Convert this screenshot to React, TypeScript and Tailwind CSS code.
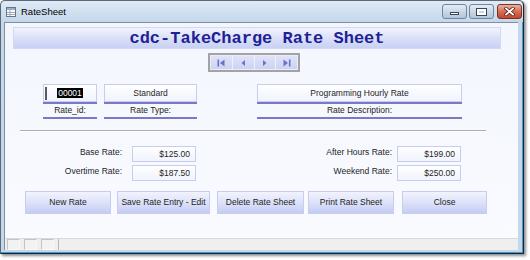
import React from "react";

const SANS = "font-['Liberation_Sans',Arial,sans-serif]";
const NAV = "#6b70cc";

function NavIcon({ kind }: { kind: "first" | "prev" | "next" | "last" }) {
  return (
    <svg width="8" height="8" viewBox="0 0 8 8">
      {kind === "first" && (
        <>
          <rect x="0.5" y="0.5" width="1.6" height="7" fill={NAV} />
          <path d="M7.5 0.5 L3 4 L7.5 7.5Z" fill={NAV} />
        </>
      )}
      {kind === "prev" && <path d="M6 1 L2.5 4 L6 7Z" fill={NAV} />}
      {kind === "next" && <path d="M2 1 L5.5 4 L2 7Z" fill={NAV} />}
      {kind === "last" && (
        <>
          <path d="M0.5 0.5 L5 4 L0.5 7.5Z" fill={NAV} />
          <rect x="5.9" y="0.5" width="1.6" height="7" fill={NAV} />
        </>
      )}
    </svg>
  );
}

function CaptionButton({ kind }: { kind: "min" | "max" | "close" }) {
  const close = kind === "close";
  return (
    <div
      className={`flex h-[15px] w-[25px] items-center justify-center rounded-[3px] border ${
        close
          ? "border-[#7a3226] bg-gradient-to-b from-[#eab0a2] via-[#d66e56] to-[#c2452c]"
          : "border-[#71849b] bg-gradient-to-b from-[#e4edf6] via-[#c9d7e7] to-[#b3c6dc]"
      }`}
    >
      {kind === "min" && <div className="mt-[4px] h-[3px] w-[9px] border border-[#3b4756] bg-white" />}
      {kind === "max" && <div className="h-[6px] w-[9px] border-[2px] border-white outline outline-1 outline-[#3b4756]" />}
      {kind === "close" && (
        <svg width="11" height="9" viewBox="0 0 11 9">
          <path d="M2 1.5 L9 7.5 M9 1.5 L2 7.5" stroke="#5a1c12" strokeWidth="3.4" strokeLinecap="square" />
          <path d="M2 1.5 L9 7.5 M9 1.5 L2 7.5" stroke="#ffffff" strokeWidth="1.8" strokeLinecap="square" />
        </svg>
      )}
    </div>
  );
}

function TitleIcon() {
  return (
    <svg width="10" height="10" viewBox="0 0 10 10">
      <rect x="0.5" y="0.5" width="9" height="9" fill="#ffffff" stroke="#6a7585" />
      <rect x="1" y="1" width="8" height="2" fill="#9aaec8" />
      <path d="M1 5.5 H9 M1 7.5 H9 M4 3 V9" stroke="#8a96a6" strokeWidth="0.8" />
    </svg>
  );
}

function TopField({
  width,
  value,
  label,
  selected,
}: {
  width: string;
  value: string;
  label: string;
  selected?: boolean;
}) {
  return (
    <div className={`flex flex-col ${width}`}>
      <div className="relative flex h-[18px] items-center justify-center border border-[#c7cdef] bg-gradient-to-b from-[#ffffff] to-[#f1f3fd] text-[8.5px] text-[#1e1e1e]">
        {selected && <div className="absolute left-[1px] top-[2px] h-[13px] w-[2px] bg-[#5a5a5a]" />}
        <span className={selected ? "bg-black px-[1px] leading-[10px] text-white" : ""}>{value}</span>
      </div>
      <div className="h-[2px] bg-[#7b78c6]" />
      <div className="flex h-[13px] items-center justify-center text-[8.5px] text-[#1e1e1e]">{label}</div>
      <div className="h-[2px] bg-[#7b78c6]" />
    </div>
  );
}

function Money({ value }: { value: string }) {
  return (
    <div className="flex h-[16px] w-[64px] items-center justify-end border border-[#c7cdef] bg-gradient-to-b from-[#ffffff] to-[#f1f3fd] pr-[5px] pt-[1px] text-[8.5px] text-[#1e1e1e]">
      {value}
    </div>
  );
}

function RateRow({ label, value, labelWidth, gap }: { label: string; value: string; labelWidth: string; gap: string }) {
  return (
    <div className={`flex items-start ${gap}`}>
      <div className={`${labelWidth} mt-[1px] text-right text-[8.5px] leading-[11px] text-[#1e1e1e]`}>{label}</div>
      <Money value={value} />
    </div>
  );
}

function ActionButton({ label, width }: { label: string; width: string }) {
  return (
    <div
      className={`flex h-[23px] ${width} items-center justify-center border border-[#c6cdf0] bg-gradient-to-b from-[#f1f3fd] via-[#dde2f8] to-[#c4ccf3] text-[8.5px] text-[#1e1e1e]`}
    >
      {label}
    </div>
  );
}

export default function App() {
  return (
    <div className={`h-[260px] w-[530px] bg-white ${SANS}`}>
      <div className="flex h-[254px] w-[524px] flex-col rounded-t-[5px] border border-[#5d6877] border-r-[#1d232b] border-b-[#1d232b] bg-[#c4d7eb] shadow-[inset_-1px_-1px_0_#3d9ad8,2px_2px_3px_rgba(0,0,0,0.45)]">
        {/* title bar */}
        <div className="flex h-[21px] items-start rounded-t-[5px] bg-gradient-to-b from-[#dfeaf6] to-[#c4d7eb] pl-[5px] pr-[1px]">
          <div className="mt-[6px]">
            <TitleIcon />
          </div>
          <div className="ml-[5px] mt-[4px] text-[9.5px] leading-[13px] text-black">RateSheet</div>
          <div className="ml-auto mt-[3px] flex gap-[2px]">
            <CaptionButton kind="min" />
            <CaptionButton kind="max" />
            <div className="ml-[1px]">
              <CaptionButton kind="close" />
            </div>
          </div>
        </div>

        {/* client area */}
        <div className="ml-[3px] mr-[5px] flex h-[228px] flex-col border-l border-t border-[#7f8fa3] bg-gradient-to-b from-[#f3f6fd] to-[#f9fbff]">
          <div className="ml-[8px] mt-[4px] flex h-[22px] w-[488px] items-center justify-center border border-[#d3d9f5] bg-gradient-to-b from-[#f1f3fd] via-[#dbe0f8] to-[#c9d1f4]">
            <span className="font-['Liberation_Mono','Courier_New',monospace] text-[17px] font-bold leading-none text-[#1f1f96]">
              cdc-TakeCharge Rate Sheet
            </span>
          </div>

          {/* record navigator */}
          <div className="ml-[203px] mt-[4px] flex h-[19px] w-[92px] border-2 border-[#a3a3a3] bg-[#e9ecfa] p-[1px]">
            {(["first", "prev", "next", "last"] as const).map((k) => (
              <div
                key={k}
                className="flex flex-1 items-center justify-center border-r border-[#eef0fb] bg-gradient-to-b from-[#dfe3f8] to-[#cdd3f3] last:border-r-0"
              >
                <NavIcon kind={k} />
              </div>
            ))}
          </div>

          {/* id / type / description */}
          <div className="ml-[38px] mt-[12px] flex">
            <TopField width="w-[54px]" value="00001" label="Rate_id:" selected />
            <div className="ml-[7px]">
              <TopField width="w-[93px]" value="Standard" label="Rate Type:" />
            </div>
            <div className="ml-[60px]">
              <TopField width="w-[205px]" value="Programming Hourly Rate" label="Rate Description:" />
            </div>
          </div>

          <div className="ml-[15px] mt-[11px] h-[2px] w-[466px] border-t border-[#acacac] bg-white" />

          {/* rates */}
          <div className="mt-[14px] flex">
            <div className="ml-[37px] flex flex-col gap-[3px]">
              <RateRow label="Base Rate:" value="$125.00" labelWidth="w-[80px]" gap="gap-[10px]" />
              <RateRow label="Overtime Rate:" value="$187.50" labelWidth="w-[80px]" gap="gap-[10px]" />
            </div>
            <div className="ml-[96px] flex flex-col gap-[3px]">
              <RateRow label="After Hours Rate:" value="$199.00" labelWidth="w-[100px]" gap="gap-[5px]" />
              <RateRow label="Weekend Rate:" value="$250.00" labelWidth="w-[100px]" gap="gap-[5px]" />
            </div>
          </div>

          {/* actions */}
          <div className="ml-[20px] mt-[10px] flex">
            <ActionButton label="New Rate" width="w-[86px]" />
            <div className="ml-[6px]">
              <ActionButton label="Save Rate Entry - Edit" width="w-[93px]" />
            </div>
            <div className="ml-[7px]">
              <ActionButton label="Delete Rate Sheet" width="w-[87px]" />
            </div>
            <div className="ml-[4px]">
              <ActionButton label="Print Rate Sheet" width="w-[86px]" />
            </div>
            <div className="ml-[8px]">
              <ActionButton label="Close" width="w-[85px]" />
            </div>
          </div>

          {/* status bar */}
          <div className="mt-auto flex h-[12px] items-center gap-[4px] border-t border-[#dadada] bg-[#efefef] pl-[2px]">
            <div className="h-[11px] w-[13px] border border-[#c4c4c4] border-r-[#f8f8f8] border-b-[#f8f8f8] bg-[#f2f2f2]" />
            <div className="h-[11px] w-[13px] border border-[#c4c4c4] border-r-[#f8f8f8] border-b-[#f8f8f8] bg-[#f2f2f2]" />
            <div className="h-[11px] w-[13px] border border-[#c4c4c4] border-r-[#f8f8f8] border-b-[#f8f8f8] bg-[#f2f2f2]" />
            <div className="h-[11px] w-px bg-[#b8b8b8]" />
          </div>
        </div>
      </div>
    </div>
  );
}
